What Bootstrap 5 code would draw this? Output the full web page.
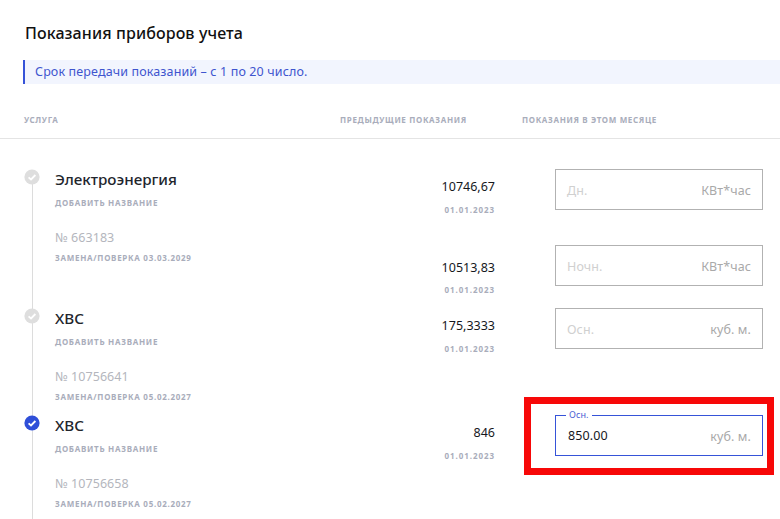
<!DOCTYPE html>
<html lang="ru">
<head>
<meta charset="utf-8">
<title>Показания приборов учета</title>
<link href="https://cdn.jsdelivr.net/npm/bootstrap@5.3.0/dist/css/bootstrap.min.css" rel="stylesheet">
<style>
html,body{height:519px;overflow:hidden}
body{font-family:"Noto Sans","Open Sans",sans-serif;color:#1c1f26;background:#fff}
.page-title{font-size:16px;font-weight:500;line-height:22px;letter-spacing:.1px;margin:22px 0 16px 25px;color:#111}
.notice{height:24px;margin-left:23px;padding-left:10px;border-left:2px solid #3653d8;background:#f2f5fe;color:#3f55cf;font-size:12.5px;line-height:24px;letter-spacing:.13px}
.col-heads{height:55px;border-bottom:1px solid #e4e4e4;padding:0 0 0 24px;margin-bottom:30px}
.tiny{font-size:8px;font-weight:700;letter-spacing:.72px;line-height:12px;color:#a9adbb;text-transform:uppercase}
.col-heads .tiny{padding-top:30px;letter-spacing:.66px}
.head-a{width:316px}
.head-b{width:182px}
.meters{position:relative;padding-left:24px;height:350px}
.meters::before{content:"";position:absolute;left:32px;top:8px;bottom:0;width:1px;background:#dcdcdc}
.meter-a{height:139px}
.meter-b{height:107px}
.meter-c{height:104px}
.dot{position:relative;flex:0 0 16px;width:16px;height:16px;margin-right:15px}
.info{width:300px;flex:0 0 300px}
.name{font-size:15.2px;font-weight:500;line-height:20px;color:#22252c;margin-bottom:8px}
.info .tiny{line-height:12px;height:12px}
.number{font-size:12.5px;line-height:18px;margin-top:20px;color:#b4b6bd;letter-spacing:.05px}
.info .when{margin-top:5px}
.reading{height:41px}
.reading-next{margin-top:35px}
.prev{width:140px;flex:0 0 140px;text-align:right;padding-top:9px}
.prev-low{padding-top:14px}
.val{font-size:12.5px;line-height:18px;color:#16181d}
.prev .tiny{margin-top:8px;letter-spacing:.95px}
.prev-low .tiny{margin-top:7px}
.field{position:relative;width:208px;height:41px;margin-left:60px;border:1px solid #b2b2b2;padding:3px 11px 0 11px;font-size:12.5px;letter-spacing:.1px}
.hint{color:#d0d0d0}
.unit{color:#a9a9a9}
.field-on{border-color:#3653d8}
.field-on .typed{color:#16181d;margin-top:-2px;margin-left:1px}
.legend{position:absolute;left:10px;top:-7px;padding:0 3px;background:#fff;color:#4a60d4;font-size:9px;line-height:12px}
.mark-box{position:absolute;left:-32px;right:-12px;top:-19px;bottom:-20px;border:7px solid #f70808;pointer-events:none}
</style>
</head>
<body>
<h1 class="page-title">Показания приборов учета</h1>
<div class="notice">Срок передачи показаний – с 1 по 20 число.</div>
<div class="col-heads d-flex">
  <div class="tiny head-a">Услуга</div>
  <div class="tiny head-b">Предыдущие показания</div>
  <div class="tiny">Показания в этом месяце</div>
</div>
<div class="meters">
  <div class="meter-a d-flex">
    <svg class="dot" viewBox="0 0 16 16"><circle cx="8" cy="8" r="7.6" fill="#dedede"/><path d="M4.6 8.3 7 10.5 11.4 6" fill="none" stroke="#fff" stroke-width="1.8"/></svg>
    <div class="info">
      <div class="name">Электроэнергия</div>
      <div class="tiny">Добавить название</div>
      <div class="number">№ 663183</div>
      <div class="tiny when">Замена/поверка 03.03.2029</div>
    </div>
    <div>
      <div class="reading d-flex">
        <div class="prev"><div class="val">10746,67</div><div class="tiny">01.01.2023</div></div>
        <div class="field d-flex justify-content-between align-items-center"><span class="hint">Дн.</span><span class="unit">КВт*час</span></div>
      </div>
      <div class="reading reading-next d-flex">
        <div class="prev prev-low"><div class="val">10513,83</div><div class="tiny">01.01.2023</div></div>
        <div class="field d-flex justify-content-between align-items-center"><span class="hint">Ночн.</span><span class="unit">КВт*час</span></div>
      </div>
    </div>
  </div>
  <div class="meter-b d-flex">
    <svg class="dot" viewBox="0 0 16 16"><circle cx="8" cy="8" r="7.6" fill="#dedede"/><path d="M4.6 8.3 7 10.5 11.4 6" fill="none" stroke="#fff" stroke-width="1.8"/></svg>
    <div class="info">
      <div class="name">ХВС</div>
      <div class="tiny">Добавить название</div>
      <div class="number">№ 10756641</div>
      <div class="tiny when">Замена/поверка 05.02.2027</div>
    </div>
    <div class="reading d-flex">
      <div class="prev"><div class="val">175,3333</div><div class="tiny">01.01.2023</div></div>
      <div class="field d-flex justify-content-between align-items-center"><span class="hint">Осн.</span><span class="unit">куб. м.</span></div>
    </div>
  </div>
  <div class="meter-c d-flex">
    <svg class="dot" viewBox="0 0 16 16"><circle cx="8" cy="8" r="7.6" fill="#2f4fd8"/><path d="M4.6 8.3 7 10.5 11.4 6" fill="none" stroke="#fff" stroke-width="1.8"/></svg>
    <div class="info">
      <div class="name">ХВС</div>
      <div class="tiny">Добавить название</div>
      <div class="number">№ 10756658</div>
      <div class="tiny when">Замена/поверка 05.02.2027</div>
    </div>
    <div class="reading d-flex">
      <div class="prev"><div class="val">846</div><div class="tiny">01.01.2023</div></div>
      <div class="field field-on d-flex justify-content-between align-items-center">
        <span class="legend">Осн.</span>
        <span class="typed">850.00</span><span class="unit">куб. м.</span>
        <div class="mark-box"></div>
      </div>
    </div>
  </div>
</div>
</body>
</html>
